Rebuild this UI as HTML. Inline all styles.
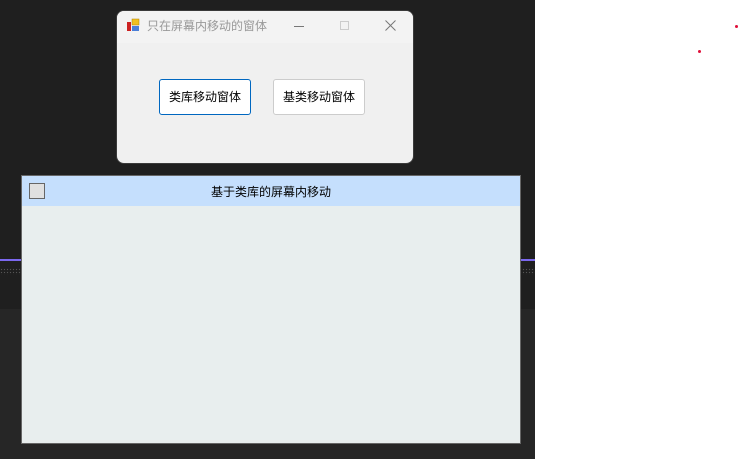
<!DOCTYPE html>
<html><head><meta charset="utf-8"><style>
*{margin:0;padding:0;box-sizing:border-box}
body{width:740px;height:459px;position:relative;overflow:hidden;background:#fff;font-family:"Liberation Sans","Noto Sans CJK SC",sans-serif}
.a{position:absolute}
</style></head><body>
<div class="a" style="left:0;top:0;width:535px;height:309px;background:#1f1f1f"></div>
<div class="a" style="left:0;top:309px;width:535px;height:150px;background:#262626"></div>
<div class="a" style="left:0;top:259px;width:535px;height:2px;background:#7b68ee"></div>
<div class="a" style="left:0;top:268px;width:535px;height:7px;background-image:radial-gradient(#555 0.7px,transparent 0.8px);background-size:3px 3px"></div>
<div class="a" style="left:735px;top:25px;width:3px;height:3px;border-radius:50%;background:#e0103a"></div>
<div class="a" style="left:698px;top:50px;width:3px;height:3px;border-radius:50%;background:#e0103a"></div>

<div class="a" style="left:116px;top:10px;width:298px;height:154px;border-radius:8px;background:#f0f0f0;border:1px solid #3a3a3a;overflow:hidden">
  <div class="a" style="left:0;top:0;width:296px;height:32px;background:#f3f3f3"></div>
  <svg class="a" style="left:9px;top:7px" width="14" height="14" viewBox="0 0 14 14"><rect x="1" y="4" width="4" height="9" fill="#c22"/><rect x="6" y="1" width="7" height="6" fill="#f0c020" stroke="#b08000" stroke-width=".5"/><rect x="6" y="8" width="7" height="5" fill="#4a7fd8"/></svg>
  <div class="a" style="left:30px;top:6px;font-size:12px;color:#999">只在屏幕内移动的窗体</div>
  <div class="a" style="left:177px;top:15px;width:10px;height:1px;background:#777"></div>
  <div class="a" style="left:223px;top:10px;width:9px;height:9px;border:1px solid #ccc"></div>
  <svg class="a" style="left:268px;top:9px" width="11" height="11"><path d="M0.5 0.5L10.5 10.5M10.5 0.5L0.5 10.5" stroke="#777" stroke-width="1"/></svg>
  <div class="a" style="left:42px;top:68px;width:92px;height:36px;background:#fff;border:1px solid #0067c0;border-radius:3px;font-size:12px;line-height:34px;text-align:center;color:#000">类库移动窗体</div>
  <div class="a" style="left:156px;top:68px;width:92px;height:36px;background:#fff;border:1px solid #ccc;border-radius:3px;font-size:12px;line-height:34px;text-align:center;color:#000">基类移动窗体</div>
</div>

<div class="a" style="left:21px;top:175px;width:500px;height:269px;background:#e8eeee;border:1px solid #666">
  <div class="a" style="left:0;top:0;width:498px;height:30px;background:#c5dffd"></div>
  <div class="a" style="left:7px;top:7px;width:16px;height:16px;background:#e0e0e0;border:1px solid #666"></div>
  <div class="a" style="left:0;top:7px;width:498px;text-align:center;font-size:12px;color:#000">基于类库的屏幕内移动</div>
</div>
</body></html>
